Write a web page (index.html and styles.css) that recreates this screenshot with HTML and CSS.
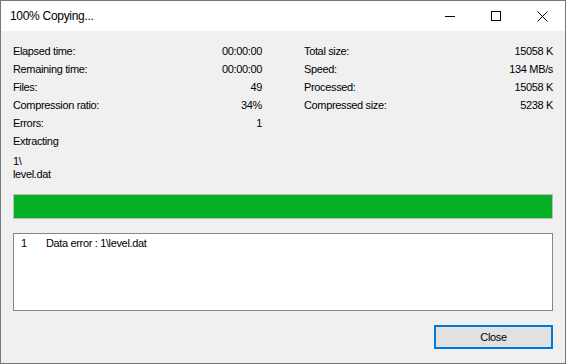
FILE: index.html
```html
<html>
<head>
    <title>Copying</title>
    <link rel="stylesheet" href="styles.css">
</head>

<body>
<div class="window">
    <div class="titlebar">
        <span class="title">100% Copying...</span>
        <div class="controls">
            <div class="ctl">
                <svg width="10" height="10" viewBox="0 0 10 10"><path d="M0 5.5H10" stroke="#000" stroke-width="1"/></svg>
            </div>
            <div class="ctl">
                <svg width="10" height="10" viewBox="0 0 10 10"><rect x="0.5" y="0.5" width="9" height="9" fill="none" stroke="#000" stroke-width="1"/></svg>
            </div>
            <div class="ctl">
                <svg width="11" height="11" viewBox="0 0 11 11"><path d="M0.5 0.5L10.5 10.5M10.5 0.5L0.5 10.5" stroke="#000" stroke-width="1"/></svg>
            </div>
        </div>
    </div>

    <div class="content">
        <div class="stats">
            <div class="col">
                <div class="row"><span>Elapsed time:</span><span>00:00:00</span></div>
                <div class="row"><span>Remaining time:</span><span>00:00:00</span></div>
                <div class="row"><span>Files:</span><span>49</span></div>
                <div class="row"><span>Compression ratio:</span><span>34%</span></div>
                <div class="row"><span>Errors:</span><span>1</span></div>
            </div>
            <div class="col">
                <div class="row"><span>Total size:</span><span>15058 K</span></div>
                <div class="row"><span>Speed:</span><span>134 MB/s</span></div>
                <div class="row"><span>Processed:</span><span>15058 K</span></div>
                <div class="row"><span>Compressed size:</span><span>5238 K</span></div>
            </div>
        </div>

        <div class="status">Extracting</div>
        <div class="path">1\<br>level.dat</div>

        <div class="progress">
            <div class="fill" style="width: 100%"></div>
        </div>

        <div class="log">
            <div class="log-row"><span class="num">1</span><span>Data error : 1\level.dat</span></div>
        </div>

        <div class="actions">
            <button class="btn">Close</button>
        </div>
    </div>
</div>
</body>

</html>
```

FILE: styles.css
```css
*{
    margin: 0;
    padding: 0;
    box-sizing: border-box;
}
body{
    font-family: 'Liberation Sans', Arial, sans-serif;
    font-size: 11px;
    color: #000;
    background: #fff;
}
.window{
    width: 566px;
    height: 364px;
    border: 1px solid #777;
    background: #f0f0f0;
    display: flex;
    flex-direction: column;
}
.titlebar{
    height: 30px;
    background: #fff;
    display: flex;
    align-items: center;
    justify-content: space-between;
}
.title{
    padding-left: 9px;
    font-size: 12px;
    letter-spacing: -0.3px;
}
.controls{
    display: flex;
    height: 30px;
}
.ctl{
    width: 46px;
    height: 30px;
    display: flex;
    align-items: center;
    justify-content: center;
}
.content{
    flex: 1;
    padding: 11px 12px 14px 12px;
    display: flex;
    flex-direction: column;
    letter-spacing: -0.35px;
}
.stats{
    display: grid;
    grid-template-columns: 249px 249px;
    column-gap: 42px;
}
.row{
    height: 18px;
    line-height: 18px;
    display: flex;
    justify-content: space-between;
}
.status{
    height: 18px;
    line-height: 18px;
}
.path{
    margin-top: 5px;
    line-height: 13px;
}
.progress{
    margin-top: 13px;
    height: 25px;
    border: 1px solid #bcbcbc;
    background: #e6e6e6;
}
.progress .fill{
    height: 100%;
    background: #06b025;
}
.log{
    margin-top: 14px;
    height: 78px;
    border: 1px solid #828790;
    background: #fff;
    padding: 2px 0 0 7px;
}
.log-row{
    line-height: 14px;
    display: flex;
}
.log-row .num{
    width: 25px;
}
.actions{
    margin-top: 14px;
    display: flex;
    justify-content: flex-end;
}
.btn{
    width: 119px;
    height: 24px;
    border: 2px solid #0078d7;
    background: #e1e1e1;
    font-family: 'Liberation Sans', Arial, sans-serif;
    font-size: 11px;
    letter-spacing: -0.35px;
    color: #000;
}
```
